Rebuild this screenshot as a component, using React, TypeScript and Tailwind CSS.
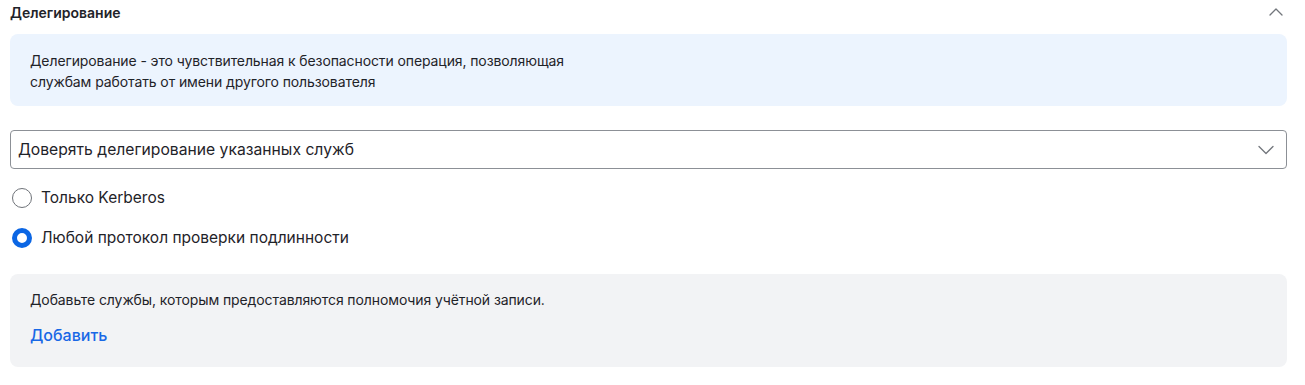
import { ChevronDown, ChevronUp } from "lucide-react";

function Radio({ checked, label }: { checked?: boolean; label: string }) {
  return (
    <label className="flex items-center gap-[9px] h-10 pl-[2px] cursor-pointer">
      {checked ? (
        <span className="h-5 w-5 rounded-full border-[5px] border-[#0b66e4] bg-white shrink-0"></span>
      ) : (
        <span className="h-5 w-5 rounded-full border border-[#6f7379] bg-white shrink-0"></span>
      )}
      <span className="text-[15.5px] text-[#1f2329]">{label}</span>
    </label>
  );
}

export default function App() {
  return (
    <div className="min-h-screen bg-white pl-[10px] pr-[18px] font-['Inter','Liberation_Sans',sans-serif]">
      {/* Section header */}
      <div className="flex items-center justify-between h-6">
        <h3 className="text-[14px] font-semibold text-[#1f2329]">Делегирование</h3>
        <ChevronUp className="h-6 w-6 -mr-[1px] text-[#72767c]" strokeWidth={1.3} />
      </div>

      {/* Info note */}
      <div className="mt-[10px] rounded-lg bg-[#ecf4fe] px-5 pt-4 pb-[14px]">
        <p className="text-[14px] tracking-[-0.1px] leading-[21px] text-[#1f2329]">
          Делегирование - это чувствительная к безопасности операция, позволяющая
          <br />
          службам работать от имени другого пользователя
        </p>
      </div>

      {/* Select */}
      <div className="mt-6 flex h-[39px] items-center justify-between rounded border border-[#8c9096] pl-[7px] pr-[6px]">
        <span className="text-[15.7px] text-[#1f2329]">Доверять делегирование указанных служб</span>
        <ChevronDown className="h-7 w-7 text-[#72767c]" strokeWidth={1.1} />
      </div>

      {/* Radios */}
      <div className="mt-[9px]">
        <Radio label="Только Kerberos" />
        <Radio checked label="Любой протокол проверки подлинности" />
      </div>

      {/* Services */}
      <div className="mt-4 rounded-lg bg-[#f2f3f5] px-5 pt-4 pb-5">
        <p className="text-[14px] tracking-[-0.1px] leading-5 text-[#1f2329]">
          Добавьте службы, которым предоставляются полномочия учётной записи.
        </p>
        <button className="mt-[13px] text-[16px] leading-6 font-medium text-[#1868e6]">Добавить</button>
      </div>
    </div>
  );
}
